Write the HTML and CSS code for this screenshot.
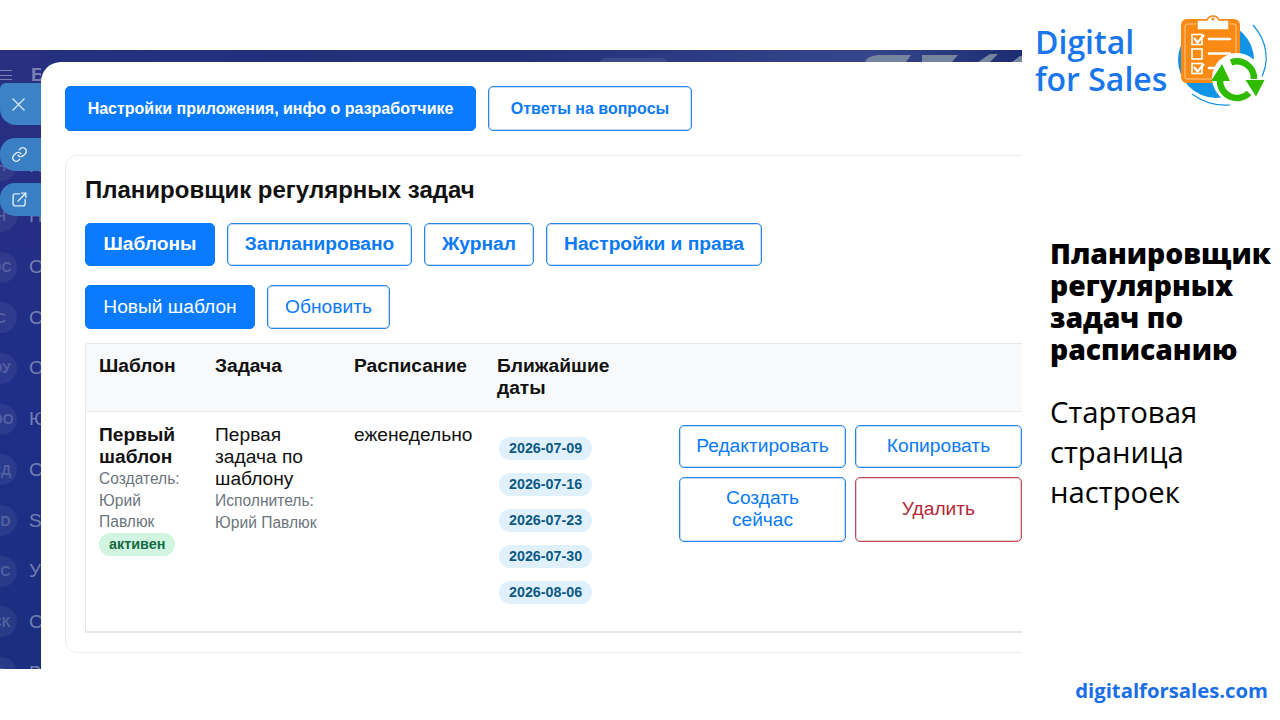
FILE: index.html
```html
<!DOCTYPE html>
<html lang="ru">
<head>
<meta charset="utf-8">
<title>Планировщик регулярных задач</title>
<link rel="stylesheet" href="styles.css">
</head>
<body>
<div class="slide">
  <section class="shot">
    <svg class="strip-art" width="1022" height="12" viewBox="0 0 1022 12">
      <path d="M600 12c0-3 3-4 8-4h52c5 0 8 1 8 4z" fill="#3a4a8c"/>
      <path d="M865 12c2-5 8-7 16-7h30l-5 7z" fill="#76859f"/>
      <path d="M922 5h36l-6 7h-30z" fill="#76859f"/>
      <path d="M978 12l12-8h8l-8 8zM1012 12l8-6h2v6z" fill="#76859f"/>
    </svg>
    <aside class="rail">
      <div class="rail-top"><span class="burger"></span><span class="rail-name">Б</span></div>
      <div class="rail-item"><span class="ava">Н</span><span class="rail-name">Н</span></div>
      <div class="rail-item"><span class="ava">Н</span><span class="rail-name">Н</span></div>
      <div class="rail-item"><span class="ava">ОС</span><span class="rail-name">О</span></div>
      <div class="rail-item"><span class="ava">С</span><span class="rail-name">С</span></div>
      <div class="rail-item"><span class="ava">ОУ</span><span class="rail-name">О</span></div>
      <div class="rail-item"><span class="ava">ЮО</span><span class="rail-name">Ю</span></div>
      <div class="rail-item"><span class="ava">СД</span><span class="rail-name">С</span></div>
      <div class="rail-item"><span class="ava">SD</span><span class="rail-name">S</span></div>
      <div class="rail-item"><span class="ava">УС</span><span class="rail-name">У</span></div>
      <div class="rail-item"><span class="ava">СК</span><span class="rail-name">С</span></div>
      <div class="rail-item"><span class="ava">В</span><span class="rail-name">В</span></div>
    </aside>
    <div class="float-btns">
      <span class="float-btn close"><svg width="13" height="13" viewBox="0 0 13 13" fill="none" stroke="#dbe9f7" stroke-width="1.300"><path d="M.5.5l12 12M12.500.5l-12 12"/></svg></span>
      <span class="float-btn"><svg width="17" height="17" viewBox="0 0 24 24" fill="none" stroke="#dbe9f7" stroke-width="2" stroke-linecap="round" stroke-linejoin="round"><path d="M10 13a5 5 0 0 0 7.500.5l3-3a5 5 0 0 0-7-7l-1.700 1.700"/><path d="M14 11a5 5 0 0 0-7.500-.5l-3 3a5 5 0 0 0 7 7l1.700-1.700"/></svg></span>
      <span class="float-btn"><svg width="17" height="17" viewBox="0 0 24 24" fill="none" stroke="#dbe9f7" stroke-width="2" stroke-linecap="round" stroke-linejoin="round"><path d="M12 4H6a3 3 0 0 0-3 3v11a3 3 0 0 0 3 3h11a3 3 0 0 0 3-3v-6"/><path d="M15 3h6v6M21 3L10 14"/></svg></span>
    </div>
    <main class="panel">
      <div class="btn-row top-row">
        <button class="btn primary small bold top-a">Настройки приложения, инфо о разработчике</button>
        <button class="btn outline small bold top-b">Ответы на вопросы</button>
      </div>
      <div class="card">
        <h1 class="title">Планировщик регулярных задач</h1>
        <div class="btn-row tabs">
          <button class="btn primary tab bold">Шаблоны</button>
          <button class="btn outline tab bold">Запланировано</button>
          <button class="btn outline tab bold">Журнал</button>
          <button class="btn outline tab bold">Настройки и права</button>
        </div>
        <div class="btn-row actions">
          <button class="btn primary">Новый шаблон</button>
          <button class="btn outline">Обновить</button>
        </div>
        <div class="table">
          <div class="row head">
            <div class="cell">Шаблон</div>
            <div class="cell">Задача</div>
            <div class="cell">Расписание</div>
            <div class="cell">Ближайшие даты</div>
            <div class="cell"></div>
          </div>
          <div class="row body">
            <div class="cell">
              <div class="strong">Первый шаблон</div>
              <div class="muted">Создатель: Юрий Павлюк</div>
              <span class="status">активен</span>
            </div>
            <div class="cell">
              <div>Первая задача по шаблону</div>
              <div class="muted">Исполнитель: Юрий Павлюк</div>
            </div>
            <div class="cell">еженедельно</div>
            <div class="cell dates">
              <span class="date">2026-07-09</span>
              <span class="date">2026-07-16</span>
              <span class="date">2026-07-23</span>
              <span class="date">2026-07-30</span>
              <span class="date">2026-08-06</span>
            </div>
            <div class="cell ops">
              <button class="btn outline op">Редактировать</button>
              <button class="btn outline op">Копировать</button>
              <button class="btn outline op">Создать сейчас</button>
              <button class="btn danger op">Удалить</button>
            </div>
          </div>
        </div>
      </div>
    </main>
  </section>
  <aside class="side">
    <div class="brand">
      <div class="brand-name">Digital<br>for Sales</div>
      <svg class="logo" width="120" height="115" viewBox="0 0 120 115">
        <circle cx="56" cy="60" r="38" fill="#1193e6"/>
        <path d="M93 25c15 17 17 38 7 55" fill="none" stroke="#1193e6" stroke-width="1.200"/>
        <path d="M32 94c12 9 24 12 38 11" fill="none" stroke="#1193e6" stroke-width="1.200"/>
        <rect x="21" y="19" width="59" height="64" rx="6" fill="#fb8a14"/>
        <rect x="25" y="24" width="51" height="55" rx="2" fill="#fb8a14" stroke="#ffd9ad" stroke-width=".8"/>
        <path d="M38 20h9a6.500 6.500 0 0 1 12 0h9a1 1 0 0 1 1 1v8a1 1 0 0 1-1 1H38a1 1 0 0 1-1-1v-8a1 1 0 0 1 1-1z" fill="#fff" stroke="#fb8a14" stroke-width="1.500"/>
        <circle cx="53" cy="19" r="1.500" fill="#fb8a14"/>
        <g fill="none" stroke="#fff">
          <rect x="32" y="34.500" width="10" height="10" stroke-width="1.600"/>
          <rect x="32" y="49" width="10" height="10" stroke-width="1.600"/>
          <rect x="32" y="63.500" width="10" height="10" stroke-width="1.600"/>
          <path d="M34 38l3.500 4.500L44 35M34 67l3.500 4.500L44 64" stroke-width="2.200"/>
          <path d="M49 39h21M49 53.500h21M49 68h9" stroke-width="2.600" stroke-linecap="round"/>
        </g>
        <circle cx="77" cy="78" r="25" fill="#fff"/>
        <g fill="none" stroke="#2fbb00" stroke-width="6.500">
          <path d="M71 62.500A17 17 0 0 1 94 79"/>
          <path d="M89 93A17 17 0 0 1 60 80"/>
        </g>
        <path d="M85.500 80h19L96 96.500zM51 81h19l-8-17z" fill="#2fbb00"/>
      </svg>
    </div>
    <h2 class="side-title">Планировщик регулярных задач по расписанию</h2>
    <p class="side-sub">Стартовая страница настроек</p>
    <div class="site">digitalforsales.com</div>
  </aside>
</div>
</body>
</html>
```
FILE: styles.css
```css
* { box-sizing: border-box; }
html, body { margin: 0; padding: 0; background: #fff; }
body { width: 1280px; height: 720px; overflow: hidden; font-family: "Liberation Sans", Arial, sans-serif; color: #111; }
.slide { display: flex; align-items: flex-start; width: 1280px; height: 720px; }

.shot {
  position: relative; flex: 0 0 1022px; height: 619px; margin-top: 50px; overflow: hidden;
  padding: 12px 0 0 41px;
  background: linear-gradient(90deg, #252f80 0%, #223079 50%, #35468a 85%, #1b2c72 100%);
}
.strip-art { position: absolute; left: 0; top: 0; }
.rail {
  position: absolute; left: 0; top: 0; bottom: 0; width: 41px; overflow: hidden;
  padding-top: 16px; display: flex; flex-direction: column; gap: 14.700px;
  background: linear-gradient(180deg, #2a2f80 0%, #1f2e88 55%, #1a2f80 100%);
}
.rail-top { display: flex; align-items: center; gap: 19px; height: 18px; flex: none; margin-bottom: 49px; }
.burger { flex: none; width: 12px; height: 10px; border-top: 1px solid rgba(255,255,255,.4); border-bottom: 1px solid rgba(255,255,255,.4); background: linear-gradient(rgba(255,255,255,.4), rgba(255,255,255,.4)) center / 100% 1px no-repeat; }
.rail-top .rail-name { font-weight: 700; }
.rail-item { display: flex; align-items: center; gap: 12px; height: 36px; margin-left: -15px; flex: none; }
.ava { flex: none; width: 32px; height: 31px; border-radius: 50%; background: rgba(255,255,255,.06); color: rgba(255,255,255,.2); font-size: 14px; font-weight: 700; display: flex; align-items: center; justify-content: center; }
.rail-name { color: rgba(255,255,255,.4); font-size: 19px; }

.float-btns { position: absolute; left: 0; top: 33px; width: 41px; display: flex; flex-direction: column; gap: 12.500px; }
.float-btn { display: flex; align-items: center; padding-left: 11px; height: 33px; background: #3a7fc4; border-radius: 15px 0 0 15px; }
.float-btn.close { height: 42px; border-radius: 6px 0 0 16px; background: #3b82c6; padding-left: 12px; }

.panel { position: relative; width: 1100px; height: 640px; padding: 24px; background: #fff; border-radius: 20px 0 0 0; }
.btn-row { display: flex; gap: 12px; }
.top-row { margin-bottom: 24px; }

.btn { font-family: inherit; font-size: 19.200px; line-height: 22px; border-radius: 5px; padding: 10px 17px 12px; border: 1px solid #2a86e6; background: #fff; color: #0b7af5; box-shadow: inset 0 0 0 1px rgba(42,134,230,.28); }
.btn.primary { background: #0a7bff; color: #fff; border-color: #0a7bff; box-shadow: none; }
.btn.small { height: 45px; font-size: 16px; padding: 0; }
.btn.top-a { width: 411px; }
.btn.top-b { width: 204px; }
.btn.bold { font-weight: 700; }
.btn.tab { height: 43px; padding: 0 0 2px; }
.btn.tab:nth-child(1) { width: 130px; }
.btn.tab:nth-child(2) { width: 185px; }
.btn.tab:nth-child(3) { width: 110px; }
.btn.tab:nth-child(4) { width: 216px; }
.btn.danger { border-color: #c04a55; color: #b02a37; box-shadow: inset 0 0 0 1px rgba(192,74,85,.28); }

.card { width: 1100px; height: 498px; padding: 0 19px; border: 1px solid #ececec; border-radius: 12px; }
.title { margin: 20px 0 19px; font-size: 24px; line-height: 28px; font-weight: 700; }
.tabs { margin-bottom: 19px; }
.actions { margin-bottom: 14px; }
.actions .btn { height: 44px; width: 123px; padding-left: 0; padding-right: 0; }
.actions .btn.primary { width: 170px; }

.table { border: 1px solid #e8e8e8; border-width: 1px 0 2px 1px; border-top-left-radius: 3px; width: 1010px; height: 290px; }
.row { display: grid; grid-template-columns: 116px 139px 143px 182px 1fr; }
.head { height: 68px; background: #f8f9fa; border-bottom: 1px solid #e9ecef; font-weight: 700; font-size: 19.200px; line-height: 22px; }
.cell { padding: 12px 13px; }
.head .cell { padding-top: 11px; }
.body { font-size: 19.200px; line-height: 22px; }
.strong { font-weight: 700; }
.muted { font-size: 15.600px; line-height: 21.500px; color: #6c757d; }
.status { display: block; width: fit-content; padding: 0 10px; height: 23px; line-height: 22px; border-radius: 12px; background: #d1f5e0; color: #146c43; font-size: 14.400px; font-weight: 700; }
.dates { display: flex; flex-direction: column; align-items: flex-start; gap: 13px; padding-top: 25px; padding-left: 15px; }
.date { height: 23px; padding: 0 10px; line-height: 23px; border-radius: 12px; background: #e0f1fd; color: #0b5a84; font-size: 14.300px; font-weight: 700; }
.ops { display: grid; grid-template-columns: 167px 167px; column-gap: 9px; row-gap: 9px; align-content: start; padding-left: 13px; padding-top: 13px; }
.op { padding: 0 17px 2px; width: 167px; height: 65px; }
.op:nth-child(-n+2) { height: 43px; padding: 0 0 2px; }

.side { flex: 1; height: 720px; position: relative; padding-left: 28px; display: flex; flex-direction: column; }
.brand { display: flex; height: 112px; padding-top: 23px; margin-left: -15px; align-items: flex-start; }
.brand-name { color: #1a76ec; font-family: "Open Sans", sans-serif; font-weight: 600; font-size: 32px; line-height: 37px; white-space: nowrap; }
.logo { position: absolute; left: 138px; top: 0; }
.side-title { margin: 125px 0 0; font-family: "Open Sans", sans-serif; font-weight: 800; font-size: 28.300px; line-height: 32px; color: #000; }
.side-sub { margin: 27px 0 0; font-family: "Open Sans", sans-serif; font-size: 29.300px; line-height: 40px; color: #000; width: 200px; }
.site { position: absolute; right: 12px; top: 677px; color: #1a6fe8; font-family: "Open Sans", sans-serif; font-weight: 700; font-size: 20.300px; line-height: 26px; }
```
